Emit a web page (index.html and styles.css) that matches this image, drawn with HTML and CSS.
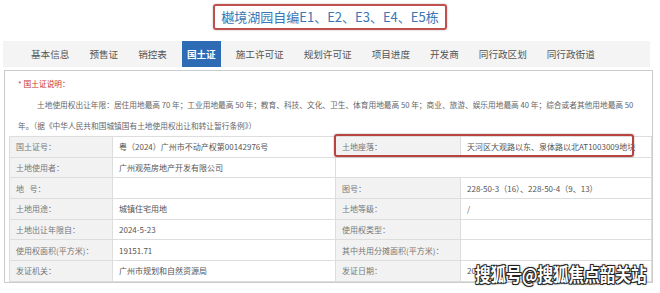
FILE: index.html
```html
<!DOCTYPE html>
<html lang="zh-CN">
<head>
    <meta charset="UTF-8">
    <meta name="viewport" content="width=device-width, initial-scale=1.0">
    <title>樾境湖园自编E1、E2、E3、E4、E5栋</title>
    <link rel="stylesheet" href="styles.css">
</head>
<body>
<div class="page">

    <div class="title-wrap">
        <h1 class="title">樾境湖园自编E1、E2、E3、E4、E5栋</h1>
    </div>

    <ul class="tabs">
        <li>基本信息</li>
        <li>预售证</li>
        <li>销控表</li>
        <li class="active">国土证</li>
        <li>施工许可证</li>
        <li>规划许可证</li>
        <li>项目进度</li>
        <li>开发商</li>
        <li>同行政区划</li>
        <li>同行政街道</li>
    </ul>

    <div class="panel">
        <p class="note-title"><span class="star">*</span>国土证说明：</p>
        <p class="note">土地使用权出让年限：居住用地最高 70 年；工业用地最高 50 年；教育、科技、文化、卫生、体育用地最高 50 年；商业、旅游、娱乐用地最高 40 年；综合或者其他用地最高 50<br>年。（据《中华人民共和国城镇国有土地使用权出让和转让暂行条例》）</p>

        <div class="table-wrap">
            <table class="info">
                <colgroup>
                    <col class="c-label">
                    <col class="c-value">
                    <col class="c-label2">
                    <col>
                </colgroup>
                <tr>
                    <th>国土证号：</th>
                    <td>粤（2024）广州市不动产权第00142976号</td>
                    <th>土地座落：</th>
                    <td>天河区大观路以东、泉体路以北AT1003009地块</td>
                </tr>
                <tr>
                    <th>土地使用者：</th>
                    <td>广州观苑房地产开发有限公司</td>
                    <td colspan="2"></td>
                </tr>
                <tr>
                    <th>地&nbsp;&nbsp;&nbsp;号：</th>
                    <td></td>
                    <th>图号：</th>
                    <td>228-50-3（16）、228-50-4（9、13）</td>
                </tr>
                <tr>
                    <th>土地用途：</th>
                    <td>城镇住宅用地</td>
                    <th>土地等级：</th>
                    <td>/</td>
                </tr>
                <tr>
                    <th>土地出让年限自：</th>
                    <td>2024-5-23</td>
                    <th>使用权类型：</th>
                    <td></td>
                </tr>
                <tr>
                    <th>使用权面积(平方米)：</th>
                    <td>19151.71</td>
                    <th>其中共用分摊面积(平方米)：</th>
                    <td></td>
                </tr>
                <tr>
                    <th>发证机关：</th>
                    <td>广州市规划和自然资源局</td>
                    <th>发证日期：</th>
                    <td>2024-5-23</td>
                </tr>
            </table>
            <div class="mark"></div>
        </div>
    </div>

    <div class="watermark">搜狐号@搜狐焦点韶关站</div>
</div>
</body>
</html>
```

FILE: styles.css
```css
body {
    margin: 0;
    background-color: #ffffff;
    color: #555555;
    font-family: "Noto Sans CJK SC", "Noto Sans", sans-serif;
}
.page {
    position: relative;
    width: 660px;
    height: 293px;
    overflow: hidden;
}
.title-wrap {
    text-align: center;
    padding-top: 3px;
}
.title {
    display: inline-block;
    margin: 0;
    padding: 0 6px;
    height: 22px;
    line-height: 22px;
    font-size: 13px;
    font-weight: normal;
    color: #3a76b3;
    border: 2px solid #c0504d;
    border-radius: 3px;
    box-shadow: 0 0 2px rgba(0, 0, 0, 0.3);
}
.tabs {
    display: flex;
    gap: 10px;
    list-style: none;
    margin: 11px 10px 0 3px;
    padding: 0 0 0 23px;
    height: 26px;
    background-color: #f4f4f4;
}
.tabs li {
    padding: 0 5px;
    font-size: 9.6px;
    line-height: 26px;
    color: #555555;
}
.tabs li.active {
    background-color: #2d6cb5;
    color: #ffffff;
    font-weight: bold;
}
.panel {
    margin: 3px 7px 0 4px;
    padding: 0 0 0 4px;
    border: 1px solid #cccccc;
}
.note-title,
.note {
    margin: 0;
    padding-left: 9px;
    font-size: 7.7px;
    line-height: 21px;
    color: #666666;
    white-space: nowrap;
}
.note-title {
    color: #c9302c;
    padding-top: 2px;
}
.star {
    margin-right: 2px;
}
.note {
    text-indent: 19px;
}
.table-wrap {
    position: relative;
}
.info {
    width: 100%;
    border-collapse: collapse;
    font-size: 8px;
    color: #555555;
}
.c-label {
    width: 103px;
}
.c-value {
    width: 223px;
}
.c-label2 {
    width: 125px;
}
.info th,
.info td {
    height: 19.7px;
    padding: 0 0 0 6px;
    border: 1px solid #dddddd;
    text-align: left;
    white-space: nowrap;
}
.info th {
    font-weight: normal;
    color: #777777;
    background-color: #f2f2f2;
}
.mark {
    position: absolute;
    left: 325px;
    top: -2px;
    width: 296px;
    height: 19px;
    border: 2px solid #b8443f;
    border-radius: 3px;
    box-shadow: 0 0 2px rgba(0, 0, 0, 0.35);
}
.watermark {
    position: absolute;
    left: 475px;
    top: 260px;
    font-size: 19px;
    font-weight: bold;
    color: #ffffff;
    white-space: nowrap;
    transform: scaleX(0.82);
    transform-origin: left center;
    text-shadow: 1px 1px 0 #222, -1px -1px 0 #222, 1px -1px 0 #222, -1px 1px 0 #222, 0 0 3px #000;
}
```
